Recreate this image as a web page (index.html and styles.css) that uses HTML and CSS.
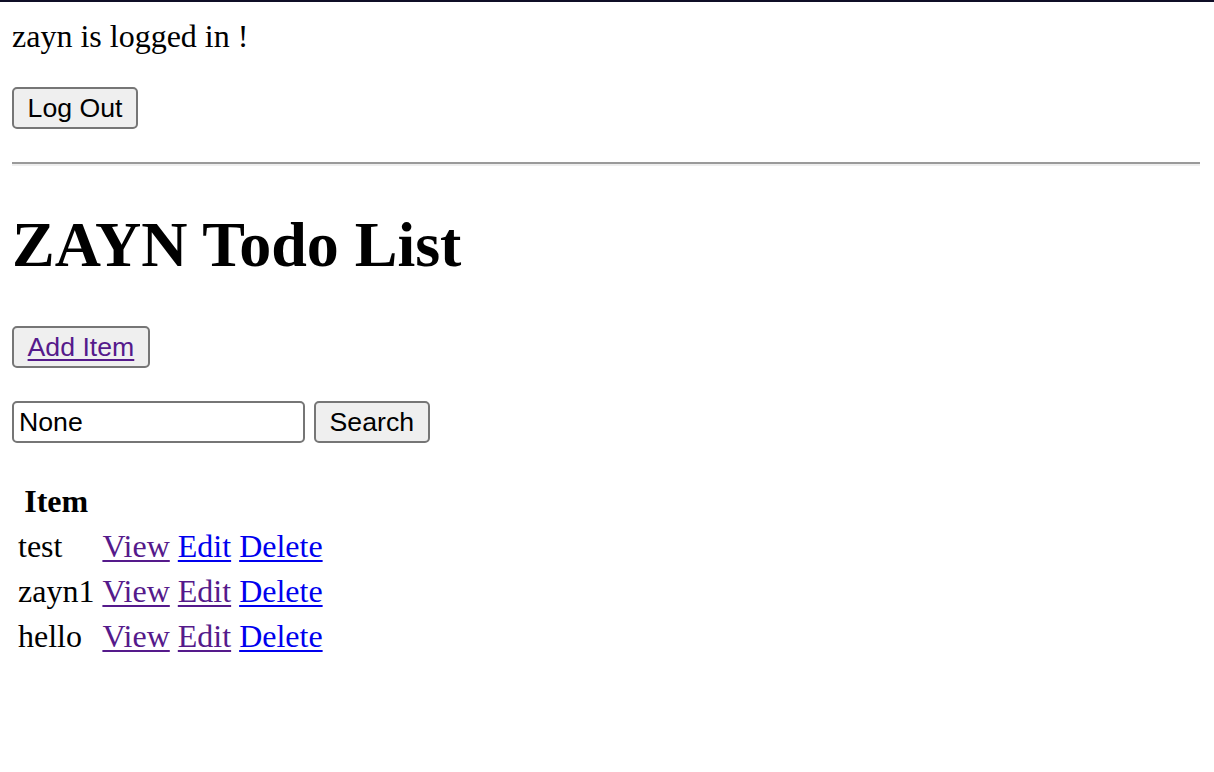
FILE: index.html
```html
<!DOCTYPE html>
<html>
<head>
<meta charset="utf-8">
<title>ZAYN Todo List</title>
<link rel="stylesheet" href="styles.css">
</head>
<body>
<p class="status">zayn is logged in !</p>
<form class="row logout-form">
  <button type="button" class="btn">Log Out</button>
</form>
<hr class="rule">
<h1 class="title">ZAYN Todo List</h1>
<form class="row add-form">
  <button type="button" class="btn"><a class="visited" href="#add">Add Item</a></button>
</form>
<form class="row search-form">
  <input class="search-input" type="text" value="None">
  <button type="button" class="btn">Search</button>
</form>
<table class="items">
  <tr><th class="head">Item</th></tr>
  <tr>
    <td>test</td>
    <td><a class="visited" href="#v1">View</a> <a class="fresh" href="#e1">Edit</a> <a class="fresh" href="#d1">Delete</a></td>
  </tr>
  <tr>
    <td>zayn1</td>
    <td><a class="visited" href="#v2">View</a> <a class="visited" href="#e2">Edit</a> <a class="fresh" href="#d2">Delete</a></td>
  </tr>
  <tr>
    <td>hello</td>
    <td><a class="visited" href="#v3">View</a> <a class="visited" href="#e3">Edit</a> <a class="fresh" href="#d3">Delete</a></td>
  </tr>
</table>
</body>
</html>
```

FILE: styles.css
```css
html, body {
  background: #ffffff;
}

body {
  margin: 0;
  padding: 0 14px 0 12px;
  border-top: 2px solid #0f0e26;
  font-family: "Liberation Serif", "Times New Roman", serif;
  font-size: 32px;
  color: #000000;
}

.status {
  margin: 16px 0 32px;
}

.row {
  display: flex;
  align-items: flex-start;
  gap: 9px;
  margin: 0;
}

.logout-form {
  margin-bottom: 33px;
}

.rule {
  margin: 0;
  height: 0;
  border: none;
  border-top: 2px solid #9a9a9a;
  border-bottom: 2px solid #eeeeee;
}

.title {
  font-size: 64px;
  font-weight: bold;
  margin: 42px 0 44px;
}

.add-form {
  margin-bottom: 33px;
}

.search-form {
  margin-bottom: 34px;
}

.btn {
  box-sizing: border-box;
  height: 42px;
  margin: 0;
  padding: 0 13.6px;
  font-family: "Liberation Sans", Arial, sans-serif;
  font-size: 26.67px;
  color: #000000;
  background: #efefef;
  border: 2px solid #767676;
  border-radius: 5px;
}

.search-input {
  box-sizing: border-box;
  width: 293px;
  height: 42px;
  margin: 0;
  padding: 0 5px;
  font-family: "Liberation Sans", Arial, sans-serif;
  font-size: 26.67px;
  color: #000000;
  background: #ffffff;
  border: 2px solid #767676;
  border-radius: 5px;
}

.items {
  border-spacing: 4px;
  margin-left: 0;
}

.items th,
.items td {
  padding: 2px;
  line-height: normal;
}

.head {
  font-weight: bold;
  text-align: center;
}

a {
  text-decoration: underline;
  text-decoration-thickness: 2px;
  text-underline-offset: 3px;
}

.visited {
  color: #551a8b;
}

.fresh {
  color: #0000ee;
}
```
